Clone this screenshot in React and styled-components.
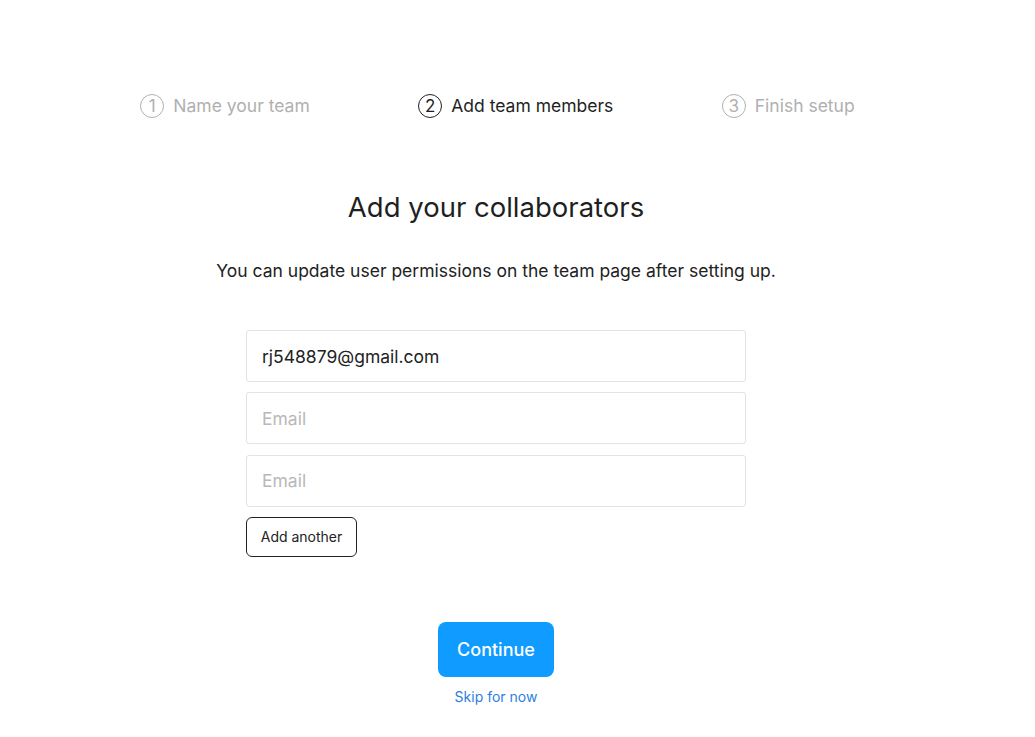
import React from "react";
import styled, { createGlobalStyle } from "styled-components";

const Global = createGlobalStyle`
  html, body { margin: 0; padding: 0; background: #fff; }
  body { font-family: Inter, "Noto Sans", sans-serif; color: #222; }
  * { box-sizing: border-box; }
`;

const Page = styled.div`
  width: 992px;
  display: flex;
  flex-direction: column;
  align-items: center;
  padding-top: 93px;
`;

const Steps = styled.ol`
  list-style: none;
  margin: 0;
  padding: 0 0 0 3px;
  display: flex;
  gap: 108.5px;
`;

const Step = styled.li`
  display: flex;
  align-items: center;
  gap: 9px;
  font-size: 17.5px;
  line-height: 26px;
  color: ${(p) => (p.$active ? "#1f1f1f" : "#b0b0b0")};
`;

const StepNum = styled.span`
  width: 24px;
  height: 24px;
  border-radius: 50%;
  border: 1.5px solid currentColor;
  display: flex;
  align-items: center;
  justify-content: center;
  font-size: 17px;
  line-height: 1;
`;

const Title = styled.h1`
  margin: 68px 0 0;
  font-size: 27.5px;
  font-weight: 400;
  line-height: 40px;
  color: #1f1f1f;
`;

const Subtitle = styled.p`
  margin: 31px 0 0;
  font-size: 17.5px;
  line-height: 26px;
  color: #222;
`;

const Form = styled.div`
  width: 500px;
  margin-top: 46px;
  display: flex;
  flex-direction: column;
  gap: 10.25px;
`;

const Input = styled.input`
  width: 100%;
  height: 52px;
  border: 1px solid #e3e3e3;
  border-radius: 3px;
  padding: 0 15px;
  font-family: inherit;
  font-size: 17.5px;
  color: #222;
  outline: none;
  &::placeholder { color: #b8b8b8; }
`;

const AddButton = styled.button`
  align-self: flex-start;
  height: 40px;
  width: 111px;
  padding: 0;
  border: 1px solid #222;
  border-radius: 6px;
  background: #fff;
  font-family: inherit;
  font-size: 14px;
  color: #222;
`;

const Continue = styled.button`
  margin-top: 65px;
  width: 116px;
  height: 55px;
  border: none;
  border-radius: 8px;
  background: #0f9bff;
  color: #fff;
  font-family: inherit;
  font-size: 18px;
  font-weight: 500;
`;

const Skip = styled.a`
  margin-top: 11px;
  font-size: 14px;
  color: #2b7fe0;
  text-decoration: none;
`;

export default function App() {
  return (
    <>
      <Global />
      <Page>
        <Steps>
          <Step><StepNum>1</StepNum>Name your team</Step>
          <Step $active><StepNum>2</StepNum>Add team members</Step>
          <Step><StepNum>3</StepNum>Finish setup</Step>
        </Steps>
        <Title>Add your collaborators</Title>
        <Subtitle>You can update user permissions on the team page after setting up.</Subtitle>
        <Form>
          <Input defaultValue="rj548879@gmail.com" />
          <Input placeholder="Email" />
          <Input placeholder="Email" />
          <AddButton>Add another</AddButton>
        </Form>
        <Continue>Continue</Continue>
        <Skip href="#">Skip for now</Skip>
      </Page>
    </>
  );
}
